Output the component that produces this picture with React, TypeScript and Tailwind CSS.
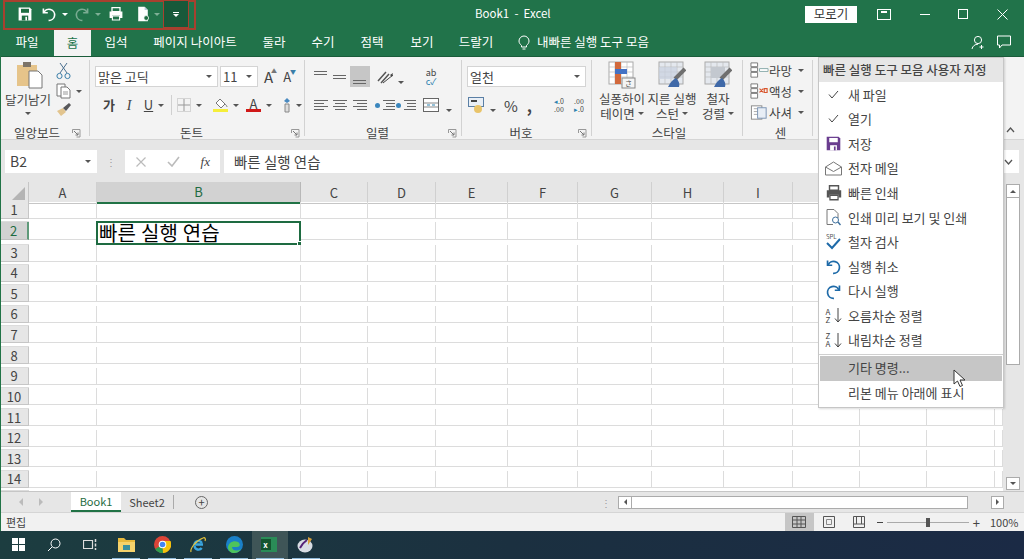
import type { ReactNode } from "react";

const font = "font-['Noto_Sans_CJK_KR','Noto_Sans',sans-serif]";

const columns = [
  { name: "A", selected: false },
  { name: "B", selected: true },
  { name: "C", selected: false },
  { name: "D", selected: false },
  { name: "E", selected: false },
  { name: "F", selected: false },
  { name: "G", selected: false },
  { name: "H", selected: false },
  { name: "I", selected: false },
  { name: "", selected: false },
  { name: "", selected: false },
  { name: "", selected: false },
  { name: "", selected: false },
];

const rowHeights = [
  "h-[20px]", "h-[23px]", "h-[20px]", "h-[20px]", "h-[21px]", "h-[20px]", "h-[21px]",
  "h-[21px]", "h-[20px]", "h-[21px]", "h-[21px]", "h-[20px]", "h-[21px]", "h-[20px]",
];

const gridCols = "grid grid-cols-[29px_68px_204px_67px_68px_72px_70px_74px_72px_69px_67px_67px_68px_8px]";

function Caret({ className = "border-t-[#555]" }: { className?: string }) {
  return <span className={`inline-block w-0 h-0 border-x-[3px] border-x-transparent border-t-[3px] ${className}`} />;
}

function Ic({ size = 18, children, className = "" }: { size?: number; children: ReactNode; className?: string }) {
  return (
    <svg width={size} height={size} viewBox="0 0 20 20" fill="none" className={`shrink-0 ${className}`}>
      {children}
    </svg>
  );
}

function SaveIcon({ color = "#fff", size = 16 }: { color?: string; size?: number }) {
  const hole = color === "#fff" ? "#1f6f43" : "#fff";
  return (
    <Ic size={size}>
      <path d="M2 2h14l2 2v14H2z" fill={color} />
      <rect x="5" y="3.5" width="10" height="5" fill={hole} />
      <rect x="6" y="12" width="8" height="6" fill={hole} />
      <rect x="10.5" y="13.5" width="2" height="4.5" fill={color} />
    </Ic>
  );
}

function UndoIcon({ color = "#fff", size = 16 }: { color?: string; size?: number }) {
  return (
    <Ic size={size}>
      <path d="M3 3v5.5h5.5" stroke={color} strokeWidth="2" />
      <path d="M3.5 8.5A7 7 0 1 1 9.5 18" stroke={color} strokeWidth="2" />
    </Ic>
  );
}

function RedoIcon({ color = "#fff", size = 16 }: { color?: string; size?: number }) {
  return (
    <Ic size={size}>
      <path d="M17 3v5.5h-5.5" stroke={color} strokeWidth="2" />
      <path d="M16.5 8.5A7 7 0 1 0 10.5 18" stroke={color} strokeWidth="2" />
    </Ic>
  );
}

function PrintIcon({ color = "#fff", size = 16 }: { color?: string; size?: number }) {
  return (
    <Ic size={size}>
      <path d="M5 2h10v5H5z" stroke={color} strokeWidth="1.6" />
      <path d="M2 7h16v8h-3v-3H5v3H2z" fill={color} />
      <path d="M5.5 12.5h9v5h-9z" stroke={color} strokeWidth="1.4" />
    </Ic>
  );
}

function PreviewDoc({ size = 16 }: { size?: number }) {
  return (
    <Ic size={size}>
      <path d="M4 1h8l4 4v14H4z" fill="#fff" />
      <path d="M12 1v4h4" fill="#bcd" />
      <circle cx="14" cy="15" r="3" fill="#1f6f43" stroke="#fff" />
    </Ic>
  );
}

function Lines({ widths, align = "items-start" }: { widths: number[]; align?: string }) {
  return (
    <span className={`flex flex-col gap-[2px] w-[14px] ${align}`}>
      {widths.map((w, i) => (
        <span key={i} className="h-px bg-[#666]" style={{ width: w }} />
      ))}
    </span>
  );
}

function Launcher() {
  return (
    <svg width="9" height="9" viewBox="0 0 9 9" fill="none">
      <path d="M.5 4V.5H8V8H4.5" stroke="#999" />
      <path d="M2 2l4 4M6 3.5V6H3.5" stroke="#777" />
    </svg>
  );
}

function Group({ label, width, launcher, labelPad = "pr-[11px]", children }: { label: string; width: string; launcher?: boolean; labelPad?: string; children: ReactNode }) {
  return (
    <div className={`${width} shrink-0 h-full flex flex-col border-r border-[#d2d2d2]`}>
      <div className="h-[64px] shrink-0">{children}</div>
      <div className={`grid grid-cols-[1fr_auto_1fr] items-center h-[17px] text-[12.5px] text-[#444] ${labelPad}`}>
        <span />
        <span>{label}</span>
        <span className="justify-self-end flex -mr-[7px]">{launcher && <Launcher />}</span>
      </div>
    </div>
  );
}

function Sep() {
  return <span className="w-px h-[20px] bg-[#d0d0d0] shrink-0" />;
}

function Select({ text, width }: { text: string; width: string }) {
  return (
    <div className={`${width} h-[21px] bg-white border border-[#d4d4d4] flex items-center justify-between pl-[2px] pr-[5px] text-[13px] text-[#444]`}>
      <span>{text}</span>
      <Caret />
    </div>
  );
}

function IndentIcon() {
  return (
    <span className="flex items-center gap-[1px]">
      <span className="w-[5px] h-[5px] rounded-full bg-[#3a86bd]" />
      <Lines widths={[12, 9, 9, 12]} align="items-end" />
    </span>
  );
}

function BigStyleIcon({ kind }: { kind: "table" | "brush" | "sheet" }) {
  return (
    <svg width="28" height="28" viewBox="0 0 28 28" fill="none">
      <rect x="1" y="1" width="24" height="22" fill={kind === "table" ? "#fff" : "#e4e8ee"} stroke="#aaa" />
      <path d="M1 6h24M1 11h24M1 16h24M7 1v22M13 1v22M19 1v22" stroke="#bbb" strokeWidth=".7" />
      {kind === "table" && (
        <>
          <rect x="7" y="1" width="6" height="5" fill="#d2693c" />
          <rect x="7" y="6" width="6" height="5" fill="#d2693c" />
          <rect x="7" y="8" width="12" height="5" fill="#4472c4" />
          <rect x="7" y="13" width="6" height="10" fill="#d2693c" />
          <rect x="14" y="17" width="13" height="10" fill="#f4f4f4" stroke="#888" />
          <text x="20.5" y="25" fontSize="7" textAnchor="middle" fill="#555">さ</text>
        </>
      )}
      {kind !== "table" && (
        <>
          {kind === "sheet" && <rect x="7" y="6" width="14" height="11" fill="#c3c8cf" />}
          {kind === "brush" && <rect x="1" y="6" width="18" height="12" fill="#c9d2e0" fillOpacity=".7" />}
          <path d="M27 8 17 18" stroke="#6f6f6f" strokeWidth="4" />
          <path d="M18 17c-4 2-6 5-8 9h11c1-3 0-6-3-9z" fill="#3f69a8" />
        </>
      )}
    </svg>
  );
}

function CellIcon({ kind }: { kind: "insert" | "delete" | "format" }) {
  if (kind === "format") {
    return (
      <Ic size={19}>
        <rect x="1.5" y="3" width="11" height="14" fill="#fff" stroke="#8a8a8a" />
        <path d="M4 6h6M4 9h6M4 12h6" stroke="#aaa" />
        <rect x="8" y="5" width="9" height="11" fill="#e8eef6" stroke="#7b93b3" />
      </Ic>
    );
  }
  return (
    <Ic size={19}>
      <path d="M1 2h7v4H1zM1 7h7v4H1zM1 12h7v5H1z" stroke="#777" fill="#fff" />
      {kind === "insert" ? (
        <path d="M10 8h9v3h-9z" stroke="#8aa" fill="#fff" />
      ) : (
        <path d="M10 7l4 4m0-4l-4 4M15 7h3v4h-3z" stroke="#d8562e" strokeWidth="1.2" />
      )}
    </Ic>
  );
}

function TitleBar() {
  return (
    <div className="relative h-[28px] shrink-0 flex items-center bg-[#21734a] text-white">
      <div className="flex items-center w-[474px] pl-[17px]">
        <span className="w-[22px]"><SaveIcon /></span>
        <span className="ml-[2px] w-[21px]"><UndoIcon /></span>
        <Caret className="border-t-white" />
        <span className="ml-[6px] w-[21px] opacity-40"><RedoIcon /></span>
        <Caret className="border-t-[#7fb096]" />
        <span className="ml-[7px] w-[27px]"><PrintIcon /></span>
        <span className="w-[19px]"><PreviewDoc /></span>
        <Caret className="border-t-[#7fb096]" />
      </div>
      <div className="w-[331px] text-[11.5px] pl-[1px]">Book1&nbsp; -&nbsp; Excel</div>
      <div className="w-[52px] h-[17px] bg-white text-[#333] text-[12.5px] flex items-center justify-center">모로기</div>
      <div className="flex items-center">
        <span className="ml-[20px] w-[14px] h-[11px] border border-white flex justify-center">
          <span className="w-[6px] h-[4px] border-t-2 border-white mt-[1px]" />
        </span>
        <span className="ml-[29px] w-[10px] h-px bg-white" />
        <span className="ml-[28px] w-[10px] h-[10px] border border-white" />
        <svg className="ml-[29px]" width="11" height="11" viewBox="0 0 11 11"><path d="M.5.5l10 10m0-10l-10 10" stroke="#fff" /></svg>
      </div>
      {/* red marks on the quick access toolbar */}
      <div className="absolute left-[3px] top-0 w-[193px] h-[30px] border-2 border-[#a8402f] pointer-events-none" />
      <div className="absolute left-[163px] top-0 w-[26px] h-[28px] border border-[#a8402f] bg-[#18593a] flex items-center justify-center">
        <span className="flex flex-col items-center gap-[1px]">
          <span className="w-[6px] h-px bg-white" />
          <Caret className="border-t-white" />
        </span>
      </div>
    </div>
  );
}

function TabBar() {
  const tabs = [
    { label: "파일", w: "w-[54px]" },
    { label: "홈", w: "w-[37px]", active: true },
    { label: "입석", w: "w-[50px]" },
    { label: "페이지 나이아트", w: "w-[108px]" },
    { label: "둘라", w: "w-[50px]" },
    { label: "수기", w: "w-[48px]" },
    { label: "점택", w: "w-[50px]" },
    { label: "보기", w: "w-[50px]" },
    { label: "드랄기", w: "w-[58px]" },
  ];
  return (
    <div className="h-[28px] shrink-0 flex items-stretch bg-[#21734a] text-white text-[12.5px]">
      {tabs.map((t) => (
        <div
          key={t.label}
          className={`${t.w} flex items-center justify-center ${t.active ? "bg-[#f3f3f3] text-[#21734a] border-t-2 border-[#e8e8e8]" : ""}`}
        >
          {t.label}
        </div>
      ))}
      <div className="flex items-center ml-[13px] gap-[7px]">
        <svg width="12" height="15" viewBox="0 0 12 15" fill="none">
          <path d="M3.5 10.5C2 9 1 8 1 6a5 5 0 0 1 10 0c0 2-1 3-2.5 4.5V12h-5zM4.5 14h3" stroke="#fff" />
        </svg>
        <span>내빠른 실행 도구 모음</span>
      </div>
      <div className="ml-auto flex items-center gap-[11px] pr-[13px]">
        <svg width="15" height="15" viewBox="0 0 15 15" fill="none">
          <circle cx="7" cy="5" r="3.6" stroke="#fff" />
          <path d="M1 14c.5-3 3-4.8 6-4.8M10.5 10v4M8.5 12h4" stroke="#fff" />
        </svg>
        <svg width="14" height="14" viewBox="0 0 14 14" fill="none">
          <path d="M.5 1h13v9H5l-2.5 3v-3h-2z" stroke="#fff" />
        </svg>
      </div>
    </div>
  );
}

function Ribbon() {
  return (
    <div className="h-[84px] shrink-0 flex bg-[#f3f3f3] border-t border-[#1a5c3a] border-b border-b-[#d5d5d5] pt-[3px] pb-[3px] text-[#444]">
      <Group label="일앙보드" width="w-[90px]" launcher labelPad="pr-[15px]">
        <div className="flex h-full">
          <div className="w-[56px] flex flex-col items-center text-[12.5px] leading-[14px]">
            <svg width="28" height="28" viewBox="0 0 28 28" fill="none" className="mt-[1px] ml-[3px]">
              <rect x="1" y="4" width="20" height="21" fill="#e6c48a" />
              <rect x="7" y="1" width="8" height="5" fill="#7d7468" />
              <path d="M13 10h9l4 4v13H13z" fill="#fff" stroke="#777" />
            </svg>
            <span className="mt-[4px]">달기남기</span>
            <Caret className="mt-[5px] border-t-[#555]" />
          </div>
          <div className="flex flex-col gap-[3px] pt-[2px]">
            <svg width="15" height="18" viewBox="0 0 15 18" fill="none">
              <path d="M4 1l7 10M11 1 4 11" stroke="#4a6f8f" />
              <circle cx="3.5" cy="14" r="2.6" stroke="#3a7ea8" />
              <circle cx="11.5" cy="14" r="2.6" stroke="#3a7ea8" />
            </svg>
            <span className="flex items-center gap-[5px]">
              <svg width="15" height="16" viewBox="0 0 15 16" fill="none">
                <path d="M1 1h8v12H1z" fill="#fff" stroke="#777" />
                <path d="M5 4h6l3 3v8H5z" fill="#fff" stroke="#777" />
                <path d="M7 9h5M7 11h5" stroke="#999" />
              </svg>
              <Caret />
            </span>
            <svg width="15" height="15" viewBox="0 0 15 15" fill="none">
              <path d="M1 9l6-3 3 4-5 4z" fill="#e2c48e" />
              <path d="M7 6l6-5 2 2-5 6z" fill="#58585a" />
            </svg>
          </div>
        </div>
      </Group>

      <Group label="돈트" width="w-[215px]" launcher>
        <div className="flex flex-col gap-[7px] pl-[5px] pt-[6px]">
          <div className="flex items-center">
            <Select text="맑은 고딕" width="w-[123px]" />
            <span className="w-[2px]" />
            <Select text="11" width="w-[38px]" />
            <span className="ml-[6px] relative text-[15px] leading-none">A<span className="absolute -right-[4px] -top-[1px] text-[6px] text-[#777]">▲</span></span>
            <span className="ml-[10px] relative text-[13px] leading-none">A<span className="absolute -right-[5px] -top-[1px] text-[6px] text-[#3a7ea8]">▼</span></span>
          </div>
          <div className="flex items-center h-[22px]">
            <span className="ml-[4px] w-[20px] text-center text-[13px] font-bold">가</span>
            <span className="w-[20px] text-center text-[14px] italic font-['Liberation_Serif',serif]">I</span>
            <span className="w-[19px] text-center text-[13px] underline">U</span>
            <Caret />
            <span className="w-[7px]" />
            <Sep />
            <span className="ml-[5px] flex items-center gap-[5px]">
              <svg width="14" height="14" viewBox="0 0 14 14" fill="none">
                <rect x=".5" y=".5" width="13" height="13" stroke="#b5b5b5" strokeDasharray="1 1" />
                <path d="M7 1v12M1 7h12" stroke="#999" />
              </svg>
              <Caret />
            </span>
            <span className="ml-[6px]"><Sep /></span>
            <span className="ml-[5px] flex items-center gap-[5px]">
              <span className="flex flex-col items-center">
                <svg width="14" height="11" viewBox="0 0 14 11" fill="none">
                  <path d="M6 1l5 5-4 4-5-5z" fill="#fff" stroke="#777" />
                  <path d="M11 6c1 1 2 2 2 3" stroke="#777" />
                </svg>
                <span className="w-[15px] h-[3px] bg-[#f5ee3a]" />
              </span>
              <Caret />
            </span>
            <span className="ml-[7px] flex items-center gap-[5px]">
              <span className="flex flex-col items-center text-[13px] leading-[11px]">
                A
                <span className="w-[15px] h-[3px] bg-[#d01818]" />
              </span>
              <Caret />
            </span>
            <span className="ml-[6px]"><Sep /></span>
            <span className="ml-[4px] flex items-center gap-[4px]">
              <svg width="10" height="16" viewBox="0 0 10 16" fill="none">
                <path d="M5 1l3 3-3 2-3-2z" fill="#4a8ac0" />
                <path d="M3 7h4v8H3z" fill="#ddd" stroke="#888" />
              </svg>
              <Caret />
            </span>
          </div>
        </div>
      </Group>

      <Group label="일렬" width="w-[157px]" launcher>
        <div className="flex flex-col gap-[7px] pl-[6px] pt-[6px]">
          <div className="flex items-center h-[21px]">
            <span className="w-[19px] flex justify-center pb-[8px]"><Lines widths={[13, 13]} /></span>
            <span className="w-[20px] flex justify-center"><Lines widths={[13, 13]} /></span>
            <span className="w-[20px] h-[21px] bg-[#c6c6c6] flex justify-center items-end pb-[3px]"><Lines widths={[13, 13]} /></span>
            <span className="ml-[3px]"><Sep /></span>
            <svg className="ml-[3px]" width="19" height="18" viewBox="0 0 19 18" fill="none">
              <path d="M2 13 10 4M5 15 13 6" stroke="#555" strokeWidth="1.5" />
              <path d="M7 15l10-8" stroke="#444" />
              <path d="M17 5l-1 4-2-2z" fill="#444" />
            </svg>
            <span className="ml-[3px]"><Caret /></span>
            <span className="ml-[14px]"><Sep /></span>
            <span className="ml-[3px] w-[20px] flex flex-col items-center text-[9px] leading-[9px]">
              <span>ab</span>
              <span className="text-[#2b82b0]">c✓</span>
            </span>
          </div>
          <div className="flex items-center h-[22px]">
            <span className="w-[19px] flex justify-center"><Lines widths={[14, 10, 14, 10]} /></span>
            <span className="w-[20px] flex justify-center"><Lines widths={[14, 10, 14, 10]} align="items-center" /></span>
            <span className="w-[20px] flex justify-center"><Lines widths={[14, 10, 14, 10]} align="items-end" /></span>
            <span className="w-[5px]" />
            <span className="w-[20px] flex justify-center"><IndentIcon /></span>
            <span className="w-[21px] flex justify-center"><IndentIcon /></span>
            <span className="ml-[4px]"><Sep /></span>
            <svg className="ml-[3px]" width="17" height="16" viewBox="0 0 17 16" fill="none">
              <rect x=".5" y="1.5" width="15" height="13" fill="#fff" stroke="#666" />
              <path d="M1 6h14M1 10h14" stroke="#888" />
              <path d="M4 8h3M9 8h3" stroke="#2b82b0" />
            </svg>
            <span className="ml-[6px]"><Caret /></span>
          </div>
        </div>
      </Group>

      <Group label="버호" width="w-[130px]" launcher>
        <div className="flex flex-col gap-[7px] pl-[5px] pt-[6px]">
          <Select text="얼천" width="w-[119px]" />
          <div className="flex items-center h-[22px]">
            <svg className="ml-[1px]" width="17" height="16" viewBox="0 0 17 16" fill="none">
              <rect x=".5" y=".5" width="15" height="9" fill="#e9eff6" stroke="#5a7fa5" />
              <path d="M3 4h6" stroke="#444" strokeWidth="2" />
              <circle cx="10" cy="12" r="4" fill="#e9c46a" />
            </svg>
            <span className="ml-[5px]"><Caret /></span>
            <span className="ml-[8px] text-[15px] leading-none">%</span>
            <span className="ml-[9px] w-[8px] text-[16px] font-bold leading-none">,</span>
            <span className="ml-[6px]"><Sep /></span>
            <span className="ml-[7px] w-[16px] flex flex-col items-end text-[7px] leading-[8px]">
              <span><span className="text-[#2b82b0]">◂</span>.0</span>
              <span>.00</span>
            </span>
            <span className="ml-[4px] w-[16px] flex flex-col items-end text-[7px] leading-[8px]">
              <span>.00</span>
              <span><span className="text-[#2b82b0]">▸</span>.0</span>
            </span>
          </div>
        </div>
      </Group>

      <Group label="스타일" width="w-[151px]" labelPad="pl-[4px]">
        <div className="grid grid-cols-[50px_50px_42px] pl-[5px] pt-[1px] text-[12.5px] leading-[15px] text-center">
          {[
            { kind: "table" as const, a: "실퐁하이", b: "테이면" },
            { kind: "brush" as const, a: "지른 실행", b: "스턴" },
            { kind: "sheet" as const, a: "철자", b: "겅렬" },
          ].map((s) => (
            <div key={s.a} className="flex flex-col items-center whitespace-nowrap">
              <BigStyleIcon kind={s.kind} />
              <span className="mt-[2px]">{s.a}</span>
              <span className="flex items-center gap-[3px]">
                {s.b}
                <Caret />
              </span>
            </div>
          ))}
        </div>
      </Group>

      <Group label="센" width="w-[70px]" labelPad="pl-[6px]">
        <div className="flex flex-col gap-[1px] pl-[7px] text-[12.5px] leading-[19px]">
          {[
            { kind: "insert" as const, t: "라망" },
            { kind: "delete" as const, t: "액성" },
            { kind: "format" as const, t: "사셔" },
          ].map((c) => (
            <div key={c.t} className="flex items-center h-[20px]">
              <CellIcon kind={c.kind} />
              <span>{c.t}</span>
              <Caret className="ml-[6px] border-t-[#555]" />
            </div>
          ))}
        </div>
      </Group>

      <div className="ml-auto self-end pr-[9px] pb-[3px]">
        <svg width="9" height="6" viewBox="0 0 9 6" fill="none"><path d="M1 5l3.5-4L8 5" stroke="#555" strokeWidth="1.3" /></svg>
      </div>
    </div>
  );
}

function FormulaBar() {
  return (
    <div className="h-[40px] shrink-0 flex items-center bg-[#e6e6e6] pl-[5px] pr-[5px] pt-[3px] text-[#444]">
      <div className="w-[92px] h-[23px] bg-white flex items-center justify-between pl-[5px] pr-[6px] text-[14px]">
        B2
        <Caret />
      </div>
      <span className="w-[28px] text-center text-[#999] text-[10px] leading-none">⋮</span>
      <div className="w-[95px] h-[23px] bg-white flex items-center justify-between pl-[11px] pr-[10px]">
        <svg width="10" height="10" viewBox="0 0 10 10"><path d="M.5.5l9 9m0-9l-9 9" stroke="#bbb" strokeWidth="1.2" /></svg>
        <svg width="13" height="11" viewBox="0 0 13 11" fill="none"><path d="M1 6l4 4 7-9" stroke="#bbb" strokeWidth="1.6" /></svg>
        <span className="text-[13px] italic font-['Liberation_Serif',serif]">fx</span>
      </div>
      <div className="ml-[4px] flex-1 h-[23px] bg-white flex items-center justify-between pl-[10px] pr-[6px] text-[14.5px]">
        빠른 실행 연습
        <svg width="9" height="6" viewBox="0 0 9 6" fill="none"><path d="M1 1l3.5 4L8 1" stroke="#555" strokeWidth="1.3" /></svg>
      </div>
    </div>
  );
}

function Sheet() {
  return (
    <div className="h-[311px] shrink-0 flex bg-white">
      <div className="w-[1003px] shrink-0 overflow-hidden">
        <div className={`${gridCols} h-[22px] pt-[2px] bg-[#e6e6e6] text-[13px] text-[#444]`}>
          <div className="flex items-end justify-end pr-[3px] pb-[3px] border-b border-r border-[#c6c6c6]">
            <span className="w-0 h-0 border-l-[13px] border-l-transparent border-b-[13px] border-b-[#b4b4b4]" />
          </div>
          {columns.map((c, i) => (
            <div
              key={i}
              className={`flex items-center justify-center border-r ${
                c.selected
                  ? "bg-[#d2d2d2] text-[#1e6b41] border-r-[#b8b8b8] border-b-2 border-b-[#217346]"
                  : "border-r-[#d0d0d0] border-b border-b-[#c6c6c6]"
              }`}
            >
              {c.name}
            </div>
          ))}
          <div className="border-b border-[#c6c6c6]" />
        </div>
        {rowHeights.map((h, r) => (
          <div key={r} className={`${gridCols} ${h}`}>
            <div
              className={`flex items-center justify-center text-[13px] leading-none border-b ${
                r === 1
                  ? "bg-[#d2d2d2] text-[#1e6b41] border-b-[#c0c0c0] border-r-2 border-r-[#5f9a7a]"
                  : "bg-[#e6e6e6] text-[#444] border-r border-[#c6c6c6]"
              }`}
            >
              {r + 1}
            </div>
            {columns.map((c, i) => (
              <div key={i} className="relative border-r border-b border-[#dcdcdc]">
                {r === 1 && c.name === "B" && (
                  <div className="absolute -left-[1px] -top-[1px] w-[205px] h-[24px] border-2 border-[#1e6b41] pl-[1px] flex items-center text-[20px] tracking-[0.2px] leading-none text-black bg-white whitespace-nowrap">
                    빠른 실행 연습
                    <span className="absolute -right-[3px] -bottom-[3px] w-[5px] h-[5px] bg-[#1e6b41] border border-white" />
                  </div>
                )}
              </div>
            ))}
            <div className="border-b border-[#dcdcdc]" />
          </div>
        ))}
      </div>
      <div className="flex-1 bg-[#e6e6e6] pt-[4px] pl-[3px] pr-[4px] flex flex-col">
        <div className="h-[14px] bg-white border border-[#ababab] flex items-center justify-center">
          <span className="w-0 h-0 border-x-[3px] border-x-transparent border-b-[3px] border-b-[#555]" />
        </div>
        <div className="h-[167px] bg-white border-x border-b border-[#ababab]" />
        <div className="flex-1" />
        <div className="h-[13px] mb-[1px] bg-white border border-[#ababab] flex items-center justify-center">
          <Caret />
        </div>
      </div>
    </div>
  );
}

function SheetTabs() {
  return (
    <div className="h-[21px] shrink-0 flex items-center bg-[#e6e6e6] border-t border-[#c6c6c6] text-[11px] text-[#444]">
      <span className="ml-[19px] w-0 h-0 border-y-[4px] border-y-transparent border-r-[4px] border-r-[#bbb]" />
      <span className="ml-[16px] w-0 h-0 border-y-[4px] border-y-transparent border-l-[4px] border-l-[#bbb]" />
      <div className="ml-[28px] w-[50px] h-full bg-white border-b-2 border-[#217346] text-[#1e6b41] flex items-center justify-center">Book1</div>
      <div className="w-[52px] h-full flex items-center justify-center">Sheet2</div>
      <span className="w-px h-[14px] bg-[#aaa]" />
      <span className="ml-[21px] w-[13px] h-[13px] rounded-full border border-[#666] flex items-center justify-center text-[11px] leading-none">+</span>
      <span className="ml-[393px] w-[10px] text-center text-[#999] text-[10px]">⋮</span>
      <div className="ml-[7px] w-[14px] h-[13px] bg-white border border-[#ababab] flex items-center justify-center">
        <span className="w-0 h-0 border-y-[3px] border-y-transparent border-r-[3px] border-r-[#555]" />
      </div>
      <div className="w-[336px] h-[13px] bg-white border-y border-r border-[#ababab]" />
      <div className="w-[23px]" />
      <div className="w-[13px] h-[13px] bg-white border border-[#ababab] flex items-center justify-center">
        <span className="w-0 h-0 border-y-[3px] border-y-transparent border-l-[3px] border-l-[#555]" />
      </div>
    </div>
  );
}

function StatusBar() {
  return (
    <div className="h-[19px] shrink-0 flex items-center bg-[#f1f1f1] border-t border-[#d5d5d5] pl-[6px] text-[11px] text-[#444]">
      <span>편집</span>
      <div className="ml-auto flex items-center h-full">
        <div className="w-[29px] h-full bg-[#c6c6c6] flex items-center justify-center">
          <svg width="14" height="12" viewBox="0 0 14 12" fill="none"><path d="M.5.5h13v11H.5zM.5 4h13M.5 8h13M5 .5v11M9 .5v11" stroke="#555" /></svg>
        </div>
        <svg className="ml-[9px]" width="12" height="12" viewBox="0 0 12 12" fill="none"><path d="M.5.5h11v11H.5z" stroke="#555" /><path d="M3.5 3.5h5v5h-5z" stroke="#888" /></svg>
        <svg className="ml-[18px]" width="12" height="12" viewBox="0 0 12 12" fill="none"><path d="M.5.5h11v11H.5zM.5 8h11M3.5.5v7.5M8.5.5v7.5" stroke="#555" /></svg>
        <span className="ml-[12px] w-[6px] h-px bg-[#444]" />
        <div className="ml-[4px] w-[82px] h-px bg-[#aaa] flex items-center justify-center">
          <span className="w-[4px] h-[9px] bg-[#555]" />
        </div>
        <span className="ml-[4px] text-[13px] leading-none">+</span>
        <span className="ml-[10px] mr-[6px] w-[28px] text-right">100%</span>
      </div>
    </div>
  );
}

function TaskCell({ open, active, children }: { open?: boolean; active?: boolean; children: ReactNode }) {
  return (
    <div className={`w-[36px] h-full flex flex-col items-center ${active ? "bg-[#3f5557]" : ""}`}>
      <div className="flex-1 flex items-center justify-center">{children}</div>
      <span className={`h-px w-[28px] ${open ? "bg-[#8fb9d8]" : ""}`} />
    </div>
  );
}

function Taskbar() {
  return (
    <div className="h-[28px] shrink-0 flex items-center bg-linear-to-r from-[#1c3d40] via-[#1b3040] to-[#1b2a45]">
      <TaskCell>
        <div className="grid grid-cols-2 gap-[1px]">
          <span className="w-[6px] h-[6px] bg-white" />
          <span className="w-[6px] h-[6px] bg-white" />
          <span className="w-[6px] h-[6px] bg-white" />
          <span className="w-[6px] h-[6px] bg-white" />
        </div>
      </TaskCell>
      <TaskCell>
        <svg width="14" height="14" viewBox="0 0 14 14" fill="none">
          <circle cx="8.5" cy="5.5" r="4.5" stroke="#fff" />
          <path d="M5 9l-4 4" stroke="#fff" />
        </svg>
      </TaskCell>
      <TaskCell>
        <svg width="14" height="13" viewBox="0 0 14 13" fill="none">
          <path d="M.5 2.5h9v8h-9z" stroke="#ddd" strokeWidth="1.2" />
          <path d="M12.5 1v3M12.5 5.5v3M12.5 10v2" stroke="#ddd" strokeWidth="1.5" />
        </svg>
      </TaskCell>
      <TaskCell open>
        <svg width="17" height="15" viewBox="0 0 17 15">
          <path d="M0 1h6l2 2h9v12H0z" fill="#e8b93c" />
          <path d="M0 5h17v10H0z" fill="#f5d26b" />
          <path d="M5 8h7v5H5z" fill="#3a8f9e" />
        </svg>
      </TaskCell>
      <TaskCell open>
        <svg width="17" height="17" viewBox="0 0 17 17">
          <circle cx="8.5" cy="8.5" r="8.5" fill="#db4437" />
          <path d="M8.5 8.5 1.2 13A8.5 8.5 0 0 0 9 17z" fill="#2f9e4f" />
          <path d="M8.5 5H16.5a8.5 8.5 0 0 1-7.5 12z" fill="#f4c20d" />
          <circle cx="8.5" cy="8.5" r="3.8" fill="#fff" />
          <circle cx="8.5" cy="8.5" r="2.8" fill="#4285f4" />
        </svg>
      </TaskCell>
      <TaskCell open>
        <svg width="18" height="18" viewBox="0 0 18 18" fill="none">
          <path d="M14 8.5H5.5a4 4 0 0 1 7.4-1.6M5.5 10a4 4 0 0 0 7.2 2" stroke="#3aa6e0" strokeWidth="2.4" />
          <path d="M2 16C1 13 6 5 14 2c2-1 3 1 2 3" stroke="#e6c33a" strokeWidth="1.2" />
        </svg>
      </TaskCell>
      <TaskCell open>
        <svg width="17" height="17" viewBox="0 0 17 17">
          <circle cx="8.5" cy="8.5" r="8.5" fill="#1a80c8" />
          <path d="M2 11C3 6 8 4 12 6c3 2 2 5-1 5H6c0 3 4 5 9 2-2 3-4 4-7 4-3 0-6-2-6-6z" fill="#4ec45b" />
        </svg>
      </TaskCell>
      <TaskCell open active>
        <span className="mr-[3px] w-[16px] h-[15px] bg-[#2a8c57] flex items-center">
          <span className="w-[10px] h-[11px] bg-[#14542f] text-white text-[8px] leading-[11px] text-center font-bold">x</span>
        </span>
      </TaskCell>
      <TaskCell open>
        <svg width="18" height="18" viewBox="0 0 18 18">
          <ellipse cx="8" cy="10" rx="7.5" ry="6.5" fill="#d8dde3" />
          <path d="M3 12c2-4 4-6 7-8" stroke="#527" strokeWidth="2" fill="none" />
          <path d="M11 1l4 2-4 6z" fill="#d9a03a" />
        </svg>
      </TaskCell>
    </div>
  );
}

function MenuIcon({ name }: { name: string }) {
  switch (name) {
    case "check":
      return <svg width="11" height="9" viewBox="0 0 11 9" fill="none"><path d="M1 4.5 4 8l6-7" stroke="#444" /></svg>;
    case "save":
      return <SaveIcon color="#6a3d8f" size={17} />;
    case "mail":
      return (
        <svg width="17" height="15" viewBox="0 0 17 15" fill="none">
          <path d="M.5 6 8.5 1l8 5v8H.5z" stroke="#777" />
          <path d="M.5 6l8 4.5 8-4.5" stroke="#777" />
        </svg>
      );
    case "print":
      return <PrintIcon color="#555" size={18} />;
    case "preview":
      return (
        <svg width="15" height="17" viewBox="0 0 15 17" fill="none">
          <path d="M1 .5h7l4 4V9M1 .5v15h6" stroke="#777" />
          <circle cx="9.5" cy="11" r="3" stroke="#3d6f9c" />
          <path d="M12 13l2.5 3" stroke="#3d6f9c" strokeWidth="1.4" />
        </svg>
      );
    case "spell":
      return (
        <svg width="16" height="17" viewBox="0 0 16 17" fill="none">
          <text x="0" y="5.5" fontSize="6" fill="#555">SPL</text>
          <path d="M1 10l5 5 8-9" stroke="#1e6aa8" strokeWidth="2" />
        </svg>
      );
    case "undo":
      return <UndoIcon color="#1e6aa8" size={17} />;
    case "redo":
      return <RedoIcon color="#1e6aa8" size={17} />;
    case "asc":
    case "desc":
      return (
        <span className="flex items-center gap-[1px]">
          <span className="flex flex-col text-[8px] leading-[8px] text-[#444] w-[7px]">
            <span>{name === "asc" ? "A" : "Z"}</span>
            <span>{name === "asc" ? "Z" : "A"}</span>
          </span>
          <svg width="8" height="15" viewBox="0 0 8 15" fill="none"><path d="M4 0v14M1 10.5 4 14l3-3.5" stroke="#444" /></svg>
        </span>
      );
    default:
      return null;
  }
}

function QatMenu() {
  const items = [
    { icon: "check", label: "새 파일" },
    { icon: "check", label: "열기" },
    { icon: "save", label: "저장" },
    { icon: "mail", label: "전자 메일" },
    { icon: "print", label: "빠른 인쇄" },
    { icon: "preview", label: "인쇄 미리 보기 및 인쇄" },
    { icon: "spell", label: "철자 검사" },
    { icon: "undo", label: "실행 취소" },
    { icon: "redo", label: "다시 실행" },
    { icon: "asc", label: "오름차순 정렬" },
    { icon: "desc", label: "내림차순 정렬" },
  ];
  return (
    <div className="absolute left-[818px] top-[57px] w-[186px] h-[351px] bg-white border border-[#c6c6c6] shadow-[1px_1px_2px_rgba(0,0,0,0.15)] text-[13px] text-[#444]">
      <div className="h-[24px] bg-[#e6e6e6] flex items-center pl-[4px] text-[12.5px] font-medium whitespace-nowrap">빠른 실행 도구 모음 사용자 지정</div>
      {items.map((it) => (
        <div key={it.label} className="h-[24.6px] flex items-center">
          <span className="w-[29px] flex justify-center"><MenuIcon name={it.icon} /></span>
          <span>{it.label}</span>
        </div>
      ))}
      <div className="mt-[1px] h-px bg-[#d0d0d0]" />
      <div className="mt-[1px] mx-[1px] h-[25px] bg-[#c6c6c6] flex items-center pl-[28px]">기타 명령...</div>
      <div className="h-[25px] flex items-center pl-[29px]">리본 메뉴 아래에 표시</div>
    </div>
  );
}

export default function App() {
  return (
    <div className={`relative w-[1024px] h-[559px] overflow-hidden flex flex-col bg-[#e6e6e6] ${font}`}>
      <TitleBar />
      <TabBar />
      <Ribbon />
      <FormulaBar />
      <Sheet />
      <SheetTabs />
      <StatusBar />
      <Taskbar />
      {/* window frame on the left edge */}
      <div className="absolute left-0 top-[56px] w-px h-[475px] bg-[#217346]" />
      <QatMenu />
      {/* mouse pointer */}
      <svg className="absolute left-[953px] top-[369px]" width="13" height="19" viewBox="0 0 13 19">
        <path d="M1 1v14l3.5-3 2.5 5.5 2.5-1L7 11h5z" fill="#fff" stroke="#333" />
      </svg>
    </div>
  );
}
